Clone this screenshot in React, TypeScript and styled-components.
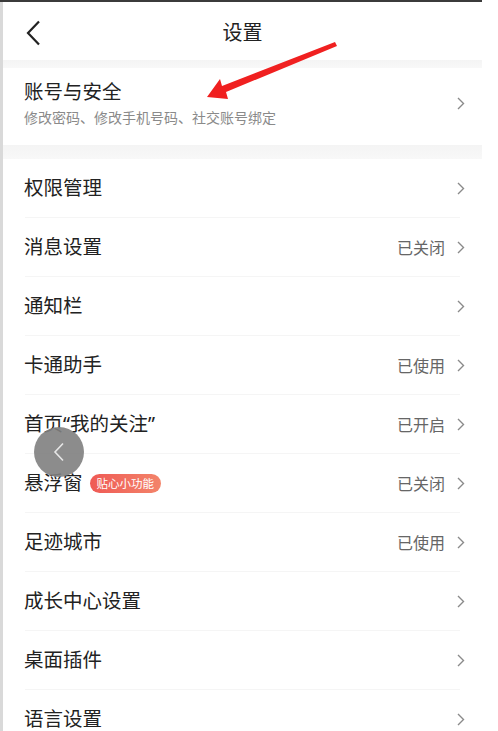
import React from "react";
import styled, { createGlobalStyle } from "styled-components";

const GlobalStyle = createGlobalStyle`
  html, body {
    margin: 0;
    padding: 0;
    background: #ffffff;
  }
  body {
    font-family: "Noto Sans", "Noto Sans CJK SC", sans-serif;
  }
`;

const settings = [
  { name: "权限管理" },
  { name: "消息设置", value: "已关闭" },
  { name: "通知栏" },
  { name: "卡通助手", value: "已使用" },
  { name: "首页“我的关注”", value: "已开启" },
  { name: "悬浮窗", value: "已关闭", badge: "贴心小功能" },
  { name: "足迹城市", value: "已使用" },
  { name: "成长中心设置" },
  { name: "桌面插件" },
  { name: "语言设置" },
];

const Page = styled.div`
  position: relative;
  width: 498px;
  height: 731px;
  overflow: hidden;
  display: flex;
  background: #fff;
`;

const LeftEdge = styled.div`
  width: 3px;
  flex-shrink: 0;
  background: #d9d9d9;
`;

const Screen = styled.div`
  width: 479px;
  flex-shrink: 0;
  display: flex;
  flex-direction: column;
  border-top: 2px solid #3b3b3b;
  margin-left: -3px;
  padding-left: 3px;
`;

const Header = styled.header`
  position: relative;
  height: 58px;
  display: flex;
  align-items: center;
  justify-content: center;
  font-size: 20px;
  color: #222;
  flex-shrink: 0;
`;

const BackBtn = styled.span`
  position: absolute;
  left: 22px;
  top: 18px;
  display: flex;
`;

const Band = styled.div<{ h: number }>`
  height: ${(p) => p.h}px;
  flex-shrink: 0;
  background: linear-gradient(#f4f4f4, #f8f8f8);
`;

const AccountRow = styled.div`
  height: 77px;
  box-sizing: border-box;
  flex-shrink: 0;
  display: flex;
  align-items: center;
  padding: 0 17px 6px 21px;
`;

const AccountText = styled.div`
  flex: 1;
  display: flex;
  flex-direction: column;
  gap: 3px;
`;

const Title = styled.span`
  font-size: 19.5px;
  line-height: 26px;
  color: #222;
  white-space: nowrap;
`;

const Sub = styled.span`
  font-size: 14px;
  line-height: 20px;
  color: #8a8a8a;
`;

const Row = styled.div`
  position: relative;
  height: 59px;
  flex-shrink: 0;
  display: flex;
  align-items: center;
  padding: 0 17px 1px 21px;
  box-sizing: border-box;
  &::after {
    content: "";
    position: absolute;
    left: 22px;
    right: 22px;
    bottom: 0;
    height: 1px;
    background: #f5f5f5;
  }
`;

const Left = styled.div`
  flex: 1;
  display: flex;
  align-items: center;
  gap: 7px;
`;

const Badge = styled.span`
  display: inline-flex;
  align-items: center;
  height: 19px;
  padding: 0 7px;
  border-radius: 10px;
  font-size: 11.5px;
  color: #fff;
  background: linear-gradient(90deg, #ef5a55, #f3846a);
`;

const Value = styled.span`
  font-size: 16px;
  color: #666;
  margin-right: 12px;
`;

const Float = styled.div`
  position: absolute;
  left: 34px;
  top: 427px;
  width: 50px;
  height: 50px;
  border-radius: 50%;
  background: rgba(128, 128, 128, 0.9);
  display: flex;
  align-items: center;
  justify-content: center;
`;

const ArrowMark = styled.svg`
  position: absolute;
  left: 200px;
  top: 38px;
`;

const Chevron = () => (
  <svg width="8" height="13" viewBox="0 0 8 13">
    <path d="M1 1l5.5 5.5L1 12" fill="none" stroke="#8a8a8a" strokeWidth="1.4" />
  </svg>
);

export default function App() {
  return (
    <>
      <GlobalStyle />
      <Page>
        <LeftEdge />
        <Screen>
          <Header>
            <BackBtn>
              <svg width="16" height="26" viewBox="0 0 16 26">
                <path d="M14 1.5L3 13l11 11.5" fill="none" stroke="#222" strokeWidth="2.2" />
              </svg>
            </BackBtn>
            设置
          </Header>
          <Band h={8} />
          <AccountRow>
            <AccountText>
              <Title>账号与安全</Title>
              <Sub>修改密码、修改手机号码、社交账号绑定</Sub>
            </AccountText>
            <Chevron />
          </AccountRow>
          <Band h={14} />
          {settings.map((item) => (
            <Row key={item.name}>
              <Left>
                <Title>{item.name}</Title>
                {item.badge && <Badge>{item.badge}</Badge>}
              </Left>
              {item.value && <Value>{item.value}</Value>}
              <Chevron />
            </Row>
          ))}
        </Screen>
        <Float>
          <svg width="12" height="20" viewBox="0 0 12 20">
            <path d="M10 1.5L2 10l8 8.5" fill="none" stroke="#e6e6e6" strokeWidth="1.6" />
          </svg>
        </Float>
        <ArrowMark width="142" height="66" viewBox="0 0 142 66">
          <polygon
            points="7,59 20,41 22,48 135,4 137,8 26,54 28,61"
            fill="#f02020"
          />
        </ArrowMark>
      </Page>
    </>
  );
}
